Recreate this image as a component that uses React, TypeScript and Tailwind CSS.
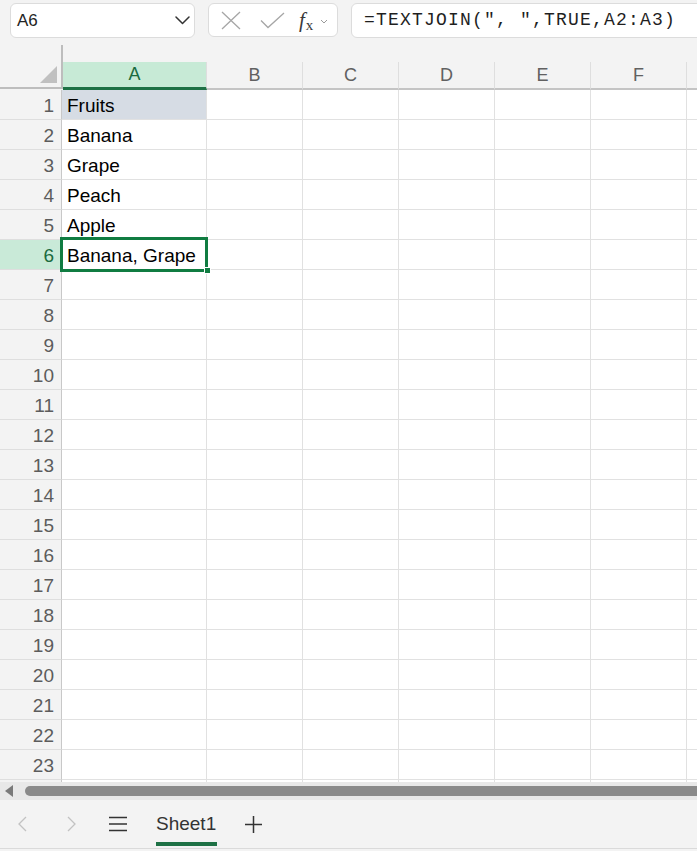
import React from "react"

const COLS = [
  { key: "A", w: "w-[145px]" },
  { key: "B", w: "w-[96px]" },
  { key: "C", w: "w-[96px]" },
  { key: "D", w: "w-[96px]" },
  { key: "E", w: "w-[96px]" },
  { key: "F", w: "w-[96px]" },
  { key: "G", w: "w-[96px]" },
]

const HEAD_W = ["w-[144px]", "w-[96px]", "w-[96px]", "w-[96px]", "w-[96px]", "w-[96px]", "w-[96px]"]

const DATA: Record<number, string> = {
  1: "Fruits",
  2: "Banana",
  3: "Grape",
  4: "Peach",
  5: "Apple",
  6: "Banana, Grape",
}

function Chevron({ className = "" }: { className?: string }) {
  return (
    <svg className={className} width="15" height="9" viewBox="0 0 15 9" fill="none">
      <path d="M1 1L7.5 7.5L14 1" stroke="#333" strokeWidth="1.5" strokeLinecap="round" strokeLinejoin="round" />
    </svg>
  )
}

export default function App() {
  const rows = Array.from({ length: 24 }, (_, i) => i + 1)

  return (
    <div
      className="relative w-[697px] h-[851px] overflow-hidden bg-[#f3f3f3] text-[#222]"
      style={{ fontFamily: "'Liberation Sans', Arial, sans-serif" }}
    >
      {/* toolbar */}
      <div className="h-[45px] flex items-start pt-[3px] pl-[10px] gap-[13px]">
        <div className="w-[185px] h-[35px] shrink-0 rounded-[6px] border border-[#dcdcdc] bg-white flex items-center justify-between pl-[6px] pr-[4px]">
          <span className="text-[17px] text-[#242424]">A6</span>
          <Chevron />
        </div>
        <div className="w-[130px] h-[34px] shrink-0 rounded-[6px] border border-[#dcdcdc] bg-white flex items-center pl-[12px]">
          <svg width="20" height="19" viewBox="0 0 20 19" fill="none">
            <path d="M1 1L19 18M19 1L1 18" stroke="#a6a6a6" strokeWidth="1.3" />
          </svg>
          <svg className="ml-[19px]" width="25" height="17" viewBox="0 0 25 17" fill="none">
            <path d="M1 8.5L8 15.5L24 1" stroke="#a6a6a6" strokeWidth="1.3" />
          </svg>
          <span className="ml-[14px] flex items-end leading-none text-[#3a3a3a]">
            <span className="italic text-[21px]" style={{ fontFamily: "'Liberation Serif', serif" }}>f</span>
            <span className="text-[15px] ml-[1px] translate-y-[2px]" style={{ fontFamily: "'Liberation Serif', serif" }}>x</span>
          </span>
          <svg className="ml-[7px] mt-[3px]" width="8" height="5" viewBox="0 0 8 5" fill="none">
            <path d="M1 1L4 4L7 1" stroke="#9a9a9a" strokeWidth="1" />
          </svg>
        </div>
        <div className="w-[370px] h-[35px] shrink-0 rounded-[6px] border border-[#dcdcdc] bg-white flex items-center pl-[12px]">
          <span
            className="text-[18px] tracking-[1.2px] text-[#1f1f1f]"
            style={{ fontFamily: "'Liberation Mono', 'DejaVu Sans Mono', monospace" }}
          >
            =TEXTJOIN(", ",TRUE,A2:A3)
          </span>
        </div>
      </div>

      {/* column headers */}
      <div className="h-[45px] flex">
        <div className="relative w-[63px] h-[44px] shrink-0 border-r-2 border-b-2 border-[#bdbdbd]">
          <div className="absolute right-[4px] bottom-[4px] w-0 h-0 border-l-[17px] border-l-transparent border-b-[17px] border-b-[#c0c0c0]" />
        </div>
        <div className="flex items-end">
          {COLS.map((c, i) => (
            <div
              key={c.key}
              className={`${HEAD_W[i]} h-[28px] shrink-0 flex items-center justify-center text-[18px] border-r border-r-[#dedede] ${
                i === 0
                  ? "bg-[#c7ead6] text-[#1b6b3f] border-b-[3px] border-b-[#1e7145]"
                  : "text-[#616161] border-b-2 border-b-[#c4c4c4]"
              }`}
            >
              {c.key === "G" ? "" : c.key}
            </div>
          ))}
        </div>
      </div>

      {/* grid */}
      <div className="relative h-[692px] overflow-hidden bg-white">
        {rows.map((r) => (
          <div key={r} className="flex h-[30px]">
            <div
              className={`w-[62px] shrink-0 flex items-center justify-end pr-[7px] pt-[3px] text-[19px] border-r border-r-[#c8c8c8] border-b border-b-[#dedede] ${
                r === 6 ? "bg-[#c9ead8] text-[#1b6b3f]" : "bg-[#f3f3f3] text-[#5c5c5c]"
              }`}
            >
              {r < 24 ? r : ""}
            </div>
            {COLS.map((c, i) => (
              <div
                key={c.key}
                className={`${c.w} shrink-0 border-r border-b border-[#e1e1e1] flex items-center pl-[5px] pt-[3px] text-[19px] text-black whitespace-nowrap ${
                  r === 1 && i === 0 ? "bg-[#d6dce4]" : ""
                }`}
              >
                {i === 0 ? DATA[r] ?? "" : ""}
              </div>
            ))}
          </div>
        ))}

        {/* selected cell */}
        <div className="absolute left-[60px] top-[147px] w-[148px] h-[35px] border-[3px] border-[#107c41]" />
        <div className="absolute left-[204px] top-[177px] w-[7px] h-[7px] bg-[#107c41] border border-white" />
      </div>

      {/* horizontal scroll */}
      <div className="h-[18px] bg-[#e8e8e8] flex items-center">
        <div className="ml-[5px] w-0 h-0 border-t-[6px] border-t-transparent border-b-[6px] border-b-transparent border-r-[8px] border-r-[#7a7a7a]" />
        <div className="ml-[12px] flex-1 h-[10px] rounded-l-full bg-[#8a8a8a]" />
      </div>

      {/* sheet tabs */}
      <div className="h-[49px] flex items-center border-b border-[#dadada]">
        <svg className="ml-[17px]" width="10" height="16" viewBox="0 0 10 16" fill="none">
          <path d="M9 1L2 8L9 15" stroke="#c2c2c2" strokeWidth="1.3" />
        </svg>
        <svg className="ml-[40px]" width="10" height="16" viewBox="0 0 10 16" fill="none">
          <path d="M1 1L8 8L1 15" stroke="#c2c2c2" strokeWidth="1.3" />
        </svg>
        <svg className="ml-[31px]" width="20" height="16" viewBox="0 0 20 16" fill="none">
          <path d="M1 1.5H19M1 8H19M1 14.5H19" stroke="#333" strokeWidth="1.6" />
        </svg>
        <div className="relative ml-[28px] h-full flex items-center">
          <span className="text-[19px] text-[#333]">Sheet1</span>
          <div className="absolute left-0 right-[-1px] bottom-[2px] h-[4px] bg-[#1e7145]" />
        </div>
        <svg className="ml-[29px]" width="17" height="17" viewBox="0 0 17 17" fill="none">
          <path d="M8.5 0V17M0 8.5H17" stroke="#333" strokeWidth="1.5" />
        </svg>
      </div>
    </div>
  )
}
